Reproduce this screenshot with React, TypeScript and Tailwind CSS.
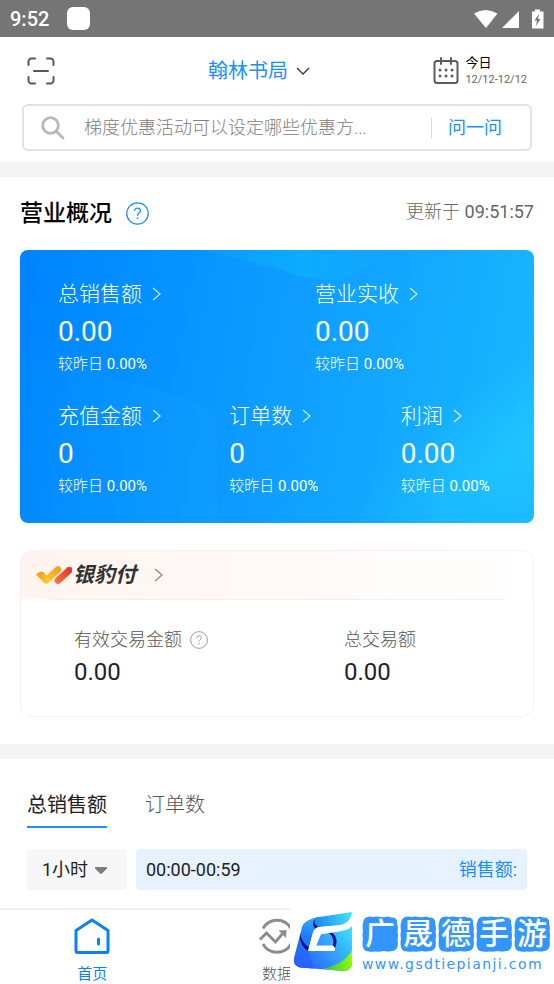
import { useState } from 'react'

// ============================================
// DATA
// ============================================

interface Stat {
  label: string
  value: string
  change: string
}

const MAIN_STATS: Stat[] = [
  { label: '总销售额', value: '0.00', change: '0.00%' },
  { label: '营业实收', value: '0.00', change: '0.00%' },
]

const SUB_STATS: Stat[] = [
  { label: '充值金额', value: '0', change: '0.00%' },
  { label: '订单数', value: '0', change: '0.00%' },
  { label: '利润', value: '0.00', change: '0.00%' },
]

const TABS = ['总销售额', '订单数']

const WATERMARK = ['广', '晟', '德', '手', '游']

// ============================================
// ICONS
// ============================================

function ScanIcon() {
  return (
    <svg width="28" height="28" viewBox="0 0 28 28" fill="none" stroke="#595959" strokeWidth="2" strokeLinecap="round">
      <path d="M1.500 8V4.500a3 3 0 0 1 3-3H8M20 1.500h3.500a3 3 0 0 1 3 3V8M26.500 20v3.500a3 3 0 0 1-3 3H20M8 26.500H4.500a3 3 0 0 1-3-3V20M7 14h14" />
    </svg>
  )
}

function CalendarIcon() {
  return (
    <svg width="26" height="28" viewBox="0 0 26 28" fill="none" stroke="#5c5c5c" strokeWidth="2">
      <rect x="1.5" y="4" width="23" height="22" rx="2.5" />
      <path d="M8 1v6M18 1v6" strokeLinecap="round" />
      <g fill="#5c5c5c" stroke="none">
        <circle cx="7" cy="13" r="1.5" />
        <circle cx="13" cy="13" r="1.5" />
        <circle cx="19" cy="13" r="1.5" />
        <circle cx="7" cy="19" r="1.5" />
        <circle cx="13" cy="19" r="1.5" />
        <circle cx="19" cy="19" r="1.5" />
      </g>
    </svg>
  )
}

function SearchIcon() {
  return (
    <svg width="24" height="24" viewBox="0 0 24 24" fill="none" stroke="#b8b8b8" strokeWidth="2.8" strokeLinecap="round">
      <circle cx="9.5" cy="9.5" r="7.8" />
      <path d="M15.5 15.5l6.5 6.5" />
    </svg>
  )
}

function Chevron({ className }: { className?: string }) {
  return (
    <svg className={className} width="9" height="14" viewBox="0 0 9 14" fill="none" stroke="currentColor">
      <path d="M1 1l7 6-7 6" strokeWidth="1.2" />
    </svg>
  )
}

function HelpIcon({ size }: { size: number }) {
  return (
    <svg width={size} height={size} viewBox="0 0 24 24" fill="none" stroke="currentColor" strokeWidth="1.3">
      <circle cx="12" cy="12" r="11.2" />
      <path d="M8.9 9.4c0-1.9 1.3-3.1 3.1-3.1s3.1 1.1 3.1 2.8c0 2.3-3.1 2.5-3.1 5.2" />
      <path d="M12 16.1v1.7" strokeWidth="1.6" />
    </svg>
  )
}

function PayLogo() {
  return (
    <svg width="36" height="19" viewBox="0 0 36 19" fill="none" strokeLinecap="round">
      <defs>
        <linearGradient id="payA" gradientUnits="userSpaceOnUse" x1="2" y1="6" x2="11" y2="15">
          <stop offset="0" stopColor="#f7941d" />
          <stop offset="1" stopColor="#ffc929" />
        </linearGradient>
        <linearGradient id="payB" gradientUnits="userSpaceOnUse" x1="10" y1="16" x2="23" y2="3">
          <stop offset="0" stopColor="#ffcc26" />
          <stop offset="1" stopColor="#f8a02e" />
        </linearGradient>
        <linearGradient id="payC" gradientUnits="userSpaceOnUse" x1="20" y1="16" x2="34" y2="3">
          <stop offset="0" stopColor="#f4763a" />
          <stop offset="1" stopColor="#e8352f" />
        </linearGradient>
      </defs>
      <path d="M10.500 14L22 3.500" stroke="url(#payB)" strokeWidth="6.500" />
      <path d="M0 8.500l4-2.700q2-1 3.500.5l6 6-1.500 5q-2 1.200-4-.5z" fill="url(#payA)" />
      <path d="M22 14.500L32.500 5" stroke="url(#payC)" strokeWidth="6.800" />
      <path d="M30 1.800l3-.8 3 .5-.5 4.500z" fill="#e8352f" />
    </svg>
  )
}

function HomeIcon() {
  return (
    <svg width="36" height="36" viewBox="0 0 36 36" fill="none" stroke="#0a80ff" strokeWidth="3" strokeLinejoin="round" strokeLinecap="round">
      <path d="M2 12.500L18 2l16 10.500V33q0 1.500-1.500 1.500h-29Q2 34.500 2 33z" />
      <path d="M24.500 21v5" />
    </svg>
  )
}

function DataIcon() {
  return (
    <svg width="36" height="36" viewBox="0 0 36 36" fill="none" stroke="#8c8c8c" strokeWidth="2.800">
      <path d="M4 10.500a16 16 0 0 1 28 0M4 26a16 16 0 0 0 28 0" />
      <path d="M1 21.500l6.500-6.500 9 9 8-9.500" />
      <path d="M19.500 12.500l8-.5-.500 8z" fill="#8c8c8c" stroke="none" />
    </svg>
  )
}

// ============================================
// STATUS BAR
// ============================================

function StatusBar() {
  return (
    <div className="flex h-[37px] items-center bg-[#757575] pr-2.5 pl-2.5 text-white">
      <span className="text-xl leading-6 font-medium">9:52</span>
      <span className="ml-[18px] h-[23px] w-[23px] rounded-md bg-white" />
      <svg className="ml-auto" width="70" height="20" viewBox="0 0 70 20" fill="#fff">
        <path d="M0 4.500Q11.500-2.500 23.500 4.500L12 19z" />
        <path d="M45 2v17H28z" />
        <path d="M58 2.500h3V.5h5v2h3.500V19.500H58z" />
        <path d="M65 5l-4.500 6.500h2.500L62 17l4.500-7H64z" fill="#757575" />
      </svg>
    </div>
  )
}

// ============================================
// STAT CELL
// ============================================

function StatCell({ stat }: { stat: Stat }) {
  return (
    <div className="pl-[38px] text-white">
      <button type="button" className="flex items-center gap-2.5 text-[21px] leading-8 font-light">
        {stat.label}
        <Chevron className="text-white/80" />
      </button>
      <p className="mt-1 text-[28px] leading-9">{stat.value}</p>
      <p className="mt-1 text-[15px] leading-5">
        <span className="font-light">较昨日</span> {stat.change}
      </p>
    </div>
  )
}

// ============================================
// WATERMARK
// ============================================

function Watermark() {
  return (
    <div className="absolute right-0 bottom-0 flex h-20 w-[264px] items-center gap-2 bg-white pr-1 pl-1">
      <svg className="mb-1 shrink-0" width="60" height="60" viewBox="0 0 60 60">
        <defs>
          <linearGradient id="wmA" gradientUnits="userSpaceOnUse" x1="22" y1="5" x2="6" y2="56">
            <stop offset="0" stopColor="#2fb4ff" />
            <stop offset="0.400" stopColor="#1d7cf5" />
            <stop offset="1" stopColor="#2a5cff" />
          </linearGradient>
          <linearGradient id="wmB" gradientUnits="userSpaceOnUse" x1="58" y1="2" x2="22" y2="14">
            <stop offset="0" stopColor="#43e6ff" />
            <stop offset="1" stopColor="#1b86f2" />
          </linearGradient>
          <linearGradient id="wmC" gradientUnits="userSpaceOnUse" x1="30" y1="56" x2="58" y2="46">
            <stop offset="0" stopColor="#3cc43c" />
            <stop offset="1" stopColor="#93ff00" />
          </linearGradient>
          <linearGradient id="wmD" gradientUnits="userSpaceOnUse" x1="58" y1="16" x2="12" y2="54">
            <stop offset="0" stopColor="#3be2ff" />
            <stop offset="1" stopColor="#2a62ff" />
          </linearGradient>
        </defs>
        {/* bowl */}
        <path d="M14 38L0 46q-1 8 6 9.500L50 59q7 0 8-7V14q-10 6-31 8l-5 12z" fill="url(#wmD)" />
        <path d="M58 38v14q-1 7-8 7l-22-2q22-4 30-19z" fill="url(#wmC)" />
        {/* left wall */}
        <path d="M24 5Q10 8 8 15L0 46q-1 8 6 9.500l14 1L14 39l5-18.500q2-5 8-5.500z" fill="url(#wmA)" />
        {/* top flag */}
        <path d="M22 5.500L58 0q-1 7-5 10-3 3-11 3.500L26 15q-7-4-4-9.500z" fill="url(#wmB)" />
        {/* folds */}
        <path d="M21.500 6q-3 5 3 9l-3 2q-5-5 0-11z" fill="#070a8a" />
        <path d="M6 22q-1 11 8 17l1-3.500Q8 31 6 22z" fill="#070a8a" />
        <path d="M35 21q6 5 4 13l2 2q4-9-2.500-15.500z" fill="#070a8a" />
        {/* cut between the flag and the bowl */}
        <path d="M25 15l17-1.500q8 0 11-3.500h5v4q-3 4-13 5.500L28 22q-2 .5-2.500 2L22 33.500h16q3.500.5 3 5.500H14l5-18.500q1.500-5 6-5.500z" fill="#fff" />
      </svg>
      <div className="flex-1">
        <div className="flex justify-between">
          {WATERMARK.map((char) => (
            <span key={char} className="relative flex h-9 w-9 items-center justify-center">
              <svg className="absolute inset-0" width="36" height="36" viewBox="0 0 36 36" fill="#3396ff">
                <path d="M5 1q3-1 6 0 4-1 8 0 4 .5 7-.5 3 1.500 6 1 4 2 3 6 1.500 4 .5 8 1 4 0 8 1 5-.5 8.500-2 3.500-5 3-4 1-8 0-5 1-9 .5-3 .5-6 0-5 0-6-4.500-1-4 0-8-1-4 0-8-1-6 .5-10Q2 2 5 1z" />
              </svg>
              <span className="relative text-3xl leading-9 font-medium text-white">{char}</span>
            </span>
          ))}
        </div>
        <p className="mt-1 font-['DejaVu_Sans',sans-serif] text-sm leading-4 tracking-widest text-[#3396ff]">
          www.gsdtiepianji.com
        </p>
      </div>
    </div>
  )
}

// ============================================
// PAGE
// ============================================

export default function App() {
  const [activeTab, setActiveTab] = useState(TABS[0])
  const [question, setQuestion] = useState('')
  const [interval, setInterval] = useState('1')

  return (
    <div className="flex min-h-screen flex-col bg-white font-[Roboto,'Noto_Sans_CJK_SC',sans-serif] text-[#222]">
      <StatusBar />

      {/* HEADER */}
      <header className="px-[22px] pb-[11px]">
        <div className="grid h-[67px] grid-cols-[1fr_auto_1fr] items-center px-[5px]">
          <button type="button" aria-label="扫一扫" className="justify-self-start">
            <ScanIcon />
          </button>
          <button type="button" className="flex items-center gap-2 pr-9 text-xl leading-7 text-[#1890ff]">
            翰林书局
            <svg width="14" height="8" viewBox="0 0 14 8" fill="none" stroke="#333" strokeWidth="1.300">
              <path d="M1 1l6 6 6-6" />
            </svg>
          </button>
          <button type="button" className="flex items-center gap-1.5 justify-self-end text-left">
            <CalendarIcon />
            <span>
              <span className="block text-[13px] leading-[18px] text-black">今日</span>
              <span className="block text-[11px] leading-4 text-[#666]">12/12-12/12</span>
            </span>
          </button>
        </div>

        <div className="flex h-[47px] items-center rounded-md border-2 border-[#e2e2e2] pr-7 pl-[17px]">
          <SearchIcon />
          <input
            type="text"
            aria-label="问题"
            value={question}
            onChange={(e) => setQuestion(e.target.value)}
            placeholder="梯度优惠活动可以设定哪些优惠方..."
            className="ml-[19px] min-w-0 flex-1 text-lg leading-6 font-light outline-none placeholder:text-[#808080]"
          />
          <button type="button" className="border-l border-[#d9d9d9] pl-4 text-lg leading-5 text-[#1890ff]">
            问一问
          </button>
        </div>
      </header>

      <main className="flex-1 pb-[18px]">
        {/* OVERVIEW */}
        <section className="border-t-[15px] border-[#f4f4f4] px-5 pb-[27px]">
          <div className="flex h-[73px] items-center justify-between">
            <div className="flex items-center gap-3.5">
              <h2 className="text-[23px] leading-8 font-medium text-black">营业概况</h2>
              <button type="button" aria-label="说明" className="text-[#1890ff]">
                <HelpIcon size={23} />
              </button>
            </div>
            <p className="pb-1 text-lg leading-6 text-[#666]">
              <span className="font-light">更新于</span> 09:51:57
            </p>
          </div>

          <div className="relative overflow-hidden rounded-lg bg-linear-100 from-[#0084ff] via-[#0f9dff] to-[#1bb8ff] pt-7 pb-[27px]">
            <svg className="absolute inset-0 h-full w-full" viewBox="0 0 513 273" preserveAspectRatio="none">
              <defs>
                <linearGradient id="cardTop" x1="0" x2="1" y1="0" y2="0">
                  <stop offset="0" stopColor="#0bb0ff" stopOpacity="0.200" />
                  <stop offset="0.500" stopColor="#0bb4ff" stopOpacity="0.600" />
                  <stop offset="1" stopColor="#18b4ff" stopOpacity="0" />
                </linearGradient>
                <linearGradient id="cardCorner" x1="0" x2="1" y1="0" y2="0">
                  <stop offset="0" stopColor="#18a8ff" stopOpacity="0.050" />
                  <stop offset="1" stopColor="#18a8ff" stopOpacity="0.220" />
                </linearGradient>
                <radialGradient
                  id="cardGlow"
                  gradientUnits="userSpaceOnUse"
                  cx="0"
                  cy="0"
                  r="1"
                  gradientTransform="translate(510 195) rotate(-35) scale(210 80)"
                >
                  <stop offset="0" stopColor="#22ccff" stopOpacity="0.700" />
                  <stop offset="1" stopColor="#22ccff" stopOpacity="0" />
                </radialGradient>
              </defs>
              <path d="M180 0l77 19q30 11 58 11 12 0 22-7 20-13 45-23z" fill="url(#cardTop)" />
              <path d="M0 102l165 46q32 10 32 36v89H0z" fill="url(#cardCorner)" />
              <rect width="513" height="273" fill="url(#cardGlow)" />
            </svg>
            <div className="relative grid grid-cols-2">
              {MAIN_STATS.map((stat) => (
                <StatCell key={stat.label} stat={stat} />
              ))}
            </div>
            <div className="relative mt-[26px] grid grid-cols-3">
              {SUB_STATS.map((stat) => (
                <StatCell key={stat.label} stat={stat} />
              ))}
            </div>
          </div>

          {/* PAYMENT CARD */}
          <div className="mt-[27px] overflow-hidden rounded-xl border border-[#f3f3f3]">
            <div className="bg-linear-to-r from-[#fff4f0] to-white px-[15px]">
              <button type="button" className="flex h-12 items-center">
                <PayLogo />
                <span className="ml-px text-[21px] leading-7 font-bold text-[#333] italic">银豹付</span>
                <Chevron className="ml-[18px] text-[#888]" />
              </button>
            </div>
            <div className="mx-7 border-t border-[#f4f0ee]" />
            <div className="flex pt-7 pb-7 pl-[53px]">
              <div className="w-[270px]">
                <div className="flex items-center gap-2 text-lg leading-6 font-light text-[#555]">
                  有效交易金额
                  <button type="button" aria-label="有效交易金额说明" className="text-[#999]">
                    <HelpIcon size={18} />
                  </button>
                </div>
                <p className="mt-1 text-2xl leading-8">0.00</p>
              </div>
              <div>
                <p className="text-lg leading-6 font-light text-[#555]">总交易额</p>
                <p className="mt-1 text-2xl leading-8">0.00</p>
              </div>
            </div>
          </div>
        </section>

        {/* SALES BY HOUR */}
        <section className="border-t-[15px] border-[#f4f4f4] px-[27px] pt-7">
          <div className="flex gap-[38px]">
            {TABS.map((tab) => (
              <button
                key={tab}
                type="button"
                onClick={() => setActiveTab(tab)}
                className={
                  tab === activeTab
                    ? 'border-b-2 border-[#1890ff] pt-1 pb-[7px] text-xl leading-7 text-[#222]'
                    : 'border-b-2 border-transparent pt-1 pb-[7px] text-xl leading-7 font-light text-[#555]'
                }
              >
                {tab}
              </button>
            ))}
          </div>
          <div className="mt-[21px] flex gap-[9px]">
            <div className="relative">
              <select
                aria-label="时间间隔"
                value={interval}
                onChange={(e) => setInterval(e.target.value)}
                className="block h-[41px] w-[100px] appearance-none rounded-sm bg-[#f7f7f7] pl-[15px] text-lg leading-6"
              >
                <option value="1">1小时</option>
                <option value="2">2小时</option>
              </select>
              <svg className="pointer-events-none absolute top-[18px] right-5" width="12" height="7" viewBox="0 0 12 7" fill="#7d7d7d">
                <path d="M0 .5Q0 0 1 0h10q1 0 1 .5v1L7 6.500q-1 .8-2 0L0 1.500z" />
              </svg>
            </div>
            <div className="flex h-[41px] flex-1 items-center justify-between rounded-sm bg-[#e6f2ff] px-2.5 text-lg leading-6">
              <span>00:00-00:59</span>
              <span className="text-[#1890ff]">销售额:</span>
            </div>
          </div>
        </section>
      </main>

      {/* BOTTOM NAV */}
      <nav className="sticky bottom-0 grid h-[76px] grid-cols-3 border-t-2 border-[#f0f0f0] bg-white text-[15px] leading-5">
        <button type="button" className="flex flex-col items-center gap-2.5 pt-2 text-[#0a80ff]">
          <HomeIcon />
          首页
        </button>
        <button type="button" className="flex flex-col items-center gap-2.5 pt-2 font-light text-[#555]">
          <DataIcon />
          数据
        </button>
        <Watermark />
      </nav>
    </div>
  )
}
